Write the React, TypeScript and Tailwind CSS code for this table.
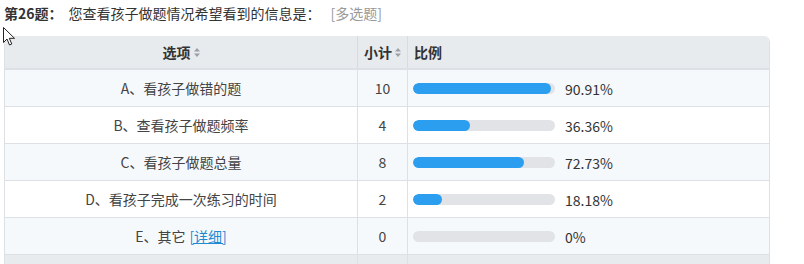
import React from 'react'

type Row = { label: string; count: number; pct: number; link?: boolean }

const rows: Row[] = [
  { label: 'A、看孩子做错的题', count: 10, pct: 90.91 },
  { label: 'B、查看孩子做题频率', count: 4, pct: 36.36 },
  { label: 'C、看孩子做题总量', count: 8, pct: 72.73 },
  { label: 'D、看孩子完成一次练习的时间', count: 2, pct: 18.18 },
  { label: 'E、其它', count: 0, pct: 0, link: true },
]

const SortIcon = () => (
  <svg width="6" height="9" viewBox="0 0 6 9" className="ml-[3px] inline-block">
    <path d="M3 0 L6 3.5 L0 3.5 Z" fill="#9aa0a6" />
    <path d="M3 9 L6 5.5 L0 5.5 Z" fill="#9aa0a6" />
  </svg>
)

const Cursor = () => (
  <svg
    width="13"
    height="19"
    viewBox="0 0 13 19"
    className="absolute left-[3px] top-[27px]"
  >
    <path
      d="M0.5 0.5 L0.5 15.5 L4 12 L6.5 18 L8.8 17 L6.3 11.3 L11.5 11.3 Z"
      fill="#fff"
      stroke="#222"
      strokeWidth="1"
      strokeLinejoin="round"
    />
  </svg>
)

export default function App() {
  const font = { fontFamily: '"Noto Sans CJK SC", "Noto Sans", sans-serif' }
  return (
    <div
      className="relative w-[804px] h-[264px] overflow-hidden bg-white text-[14px] text-[#444]"
      style={font}
    >
      <div className="h-[36px] pt-[3px] pl-[4px] leading-[20px]">
        <span className="font-bold text-[#333]">第26题：</span>
        <span className="ml-[6px] text-[#333]">您查看孩子做题情况希望看到的信息是：</span>
        <span className="ml-[10px] text-[#999]">[多选题]</span>
      </div>

      <div className="ml-[4px] w-[766px] border-l border-r border-[#dde1e5] rounded-tr-[6px] overflow-hidden">
        <div className="grid grid-cols-[353px_50px_1fr] h-[34px] bg-[#e8ebee] border-b-2 border-[#dde1e5] font-bold text-[#333] leading-[32px]">
          <div className="flex items-center justify-center border-r border-[#d8dce0]">
            选项<SortIcon />
          </div>
          <div className="flex items-center justify-center border-r border-[#d8dce0]">
            小计<SortIcon />
          </div>
          <div className="pl-[6px]">比例</div>
        </div>

        {rows.map((r, i) => (
          <div
            key={r.label}
            className={
              'grid grid-cols-[353px_50px_1fr] h-[37px] border-b border-[#dde1e5] items-stretch ' +
              (i % 2 === 0 ? 'bg-[#f6f9fc]' : 'bg-white')
            }
          >
            <div className="flex items-center justify-center border-r border-[#dde1e5]">
              {r.label}
              {r.link && (
                <span className="ml-[4px] text-[#1f8ad2] underline">[详细]</span>
              )}
            </div>
            <div className="flex items-center justify-center border-r border-[#dde1e5]">
              {r.count}
            </div>
            <div className="flex items-center pl-[5px]">
              <div className="w-[142px] h-[11px] rounded-full bg-[#e1e3e6] overflow-hidden">
                {r.pct > 0 && (
                  <div
                    className="h-full rounded-full bg-[#2c9ef0]"
                    style={{ width: `${Math.min(142, r.pct * 1.5 + 2)}px` }}
                  />
                )}
              </div>
              <span className="ml-[10px] mt-[3px] text-[#333]">{r.pct}%</span>
            </div>
          </div>
        ))}

        <div className="grid grid-cols-[353px_50px_1fr] h-[37px] bg-[#e8ebee]">
          <div className="border-r border-[#dde1e5]" />
          <div className="border-r border-[#dde1e5]" />
          <div />
        </div>
      </div>

      <Cursor />
    </div>
  )
}
